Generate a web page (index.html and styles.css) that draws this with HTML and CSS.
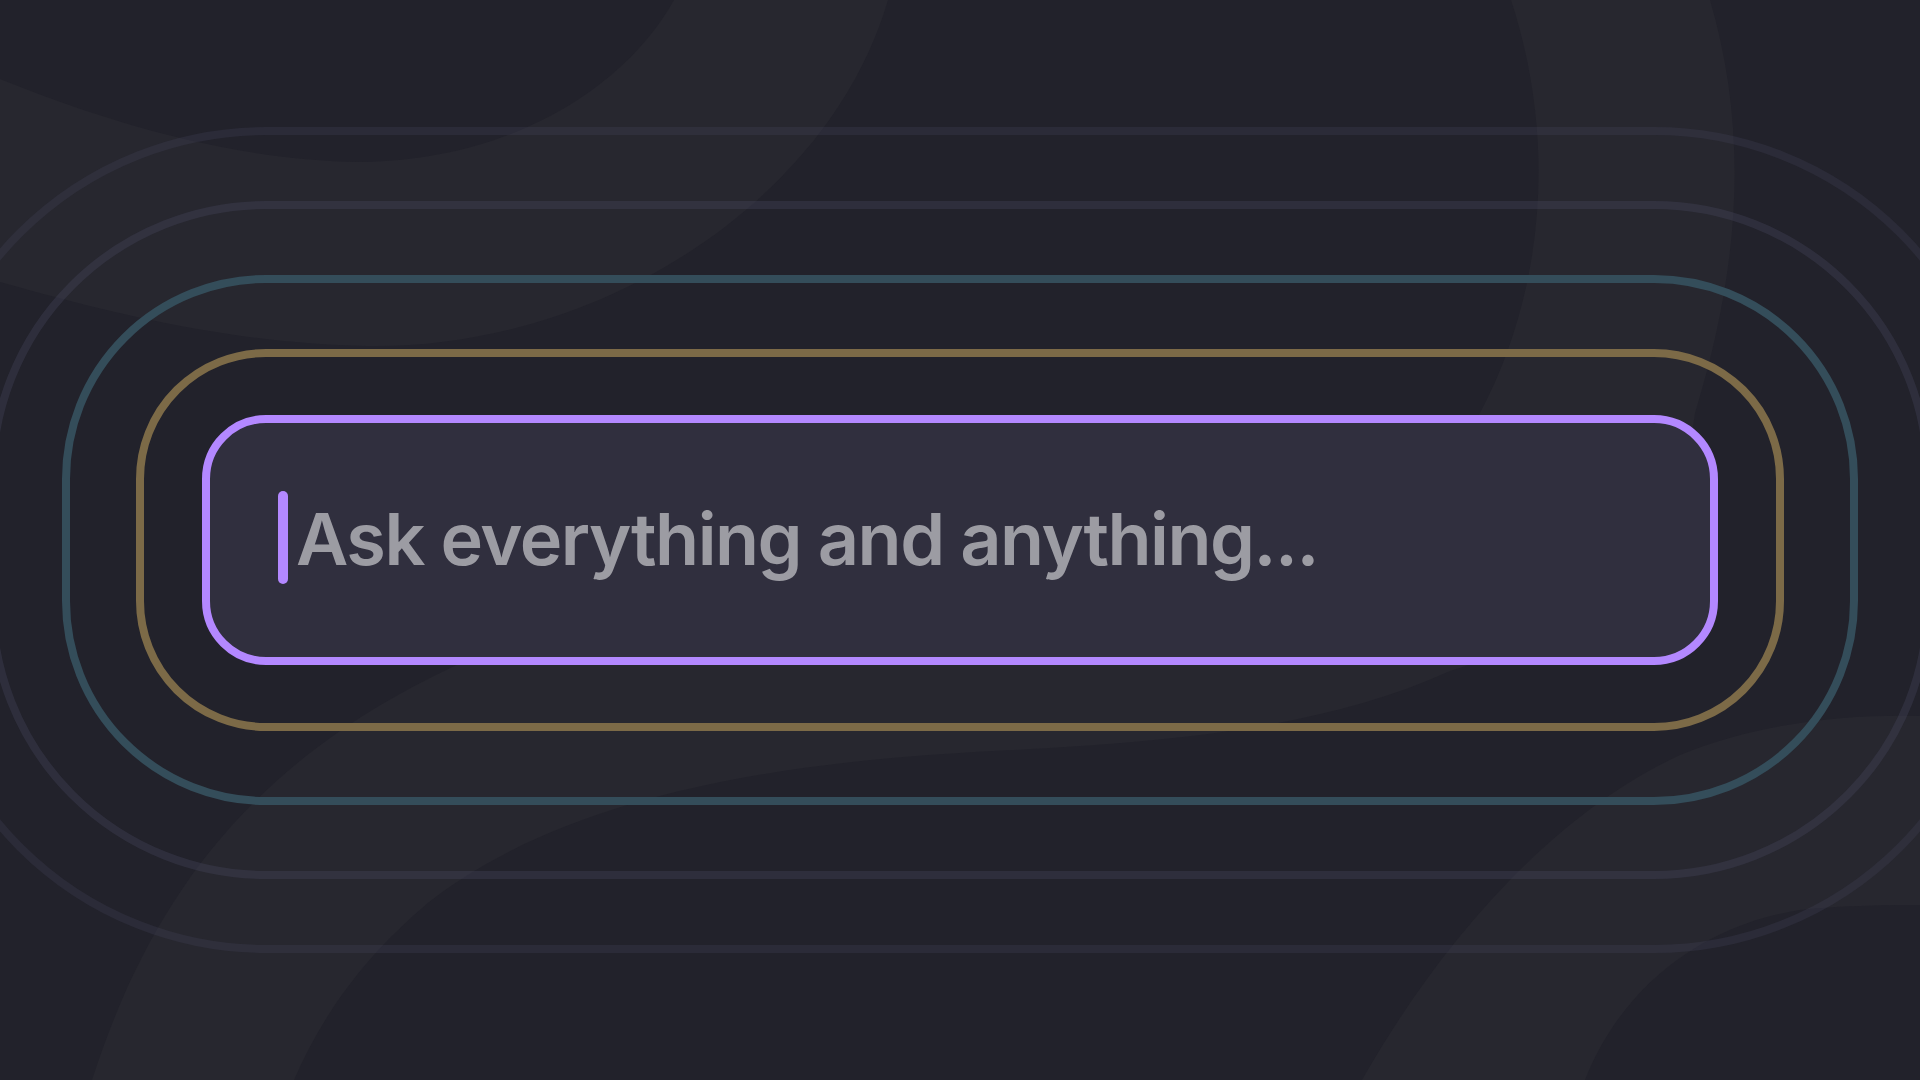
FILE: index.html
```html
<!DOCTYPE html>
<html lang="en">
<head>
  <meta charset="UTF-8">
  <title>Ask</title>
  <link rel="stylesheet" href="styles.css">
</head>
<body>

<!-- soft background shapes -->
<svg class="backdrop" viewBox="0 0 1920 1080" preserveAspectRatio="none" aria-hidden="true">
  <path class="blob" d="M0,0 H888 C830,200 600,350 367,346 C230,344 100,310 0,282 Z"/>
  <path class="hole" d="M0,0 H674 C630,80 520,160 361,162 C220,160 90,115 0,79 Z"/>
  <path class="blob" d="M1511,0 H1710 C1745,120 1745,250 1695,413 C1680,530 1620,620 1450,671 C1300,740 1100,745 960,753 C760,765 560,800 429,902 C360,960 320,1020 294,1080 H92 C150,900 250,760 459,664 C700,560 1400,560 1480,413 C1540,300 1560,150 1511,0 Z"/>
  <path class="blob" d="M1362,1080 C1430,960 1540,820 1680,755 C1760,722 1850,714 1920,716 V905 C1890,905 1850,905 1800,910 C1700,925 1620,990 1585,1080 Z"/>
</svg>

<div class="stage">
  <div class="ring ring-5">
    <div class="ring ring-4">
      <div class="ring ring-3">
        <div class="ring ring-2">
          <div class="field">
            <span class="caret"></span>
            <span class="placeholder">Ask everything and anything...</span>
          </div>
        </div>
      </div>
    </div>
  </div>
</div>

</body>
</html>
```

FILE: styles.css
```css
html, body {
  margin: 0;
  height: 100%;
}
body {
  background: #22222b;
  font-family: Inter, "Noto Sans", sans-serif;
  overflow: hidden;
}
.backdrop {
  position: fixed;
  top: 0;
  left: 0;
  width: 100%;
  height: 100%;
}
.blob {
  fill: #27272f;
}
.hole {
  fill: #22222b;
}
.stage {
  position: relative;
  height: 100vh;
  display: flex;
  align-items: center;
  justify-content: center;
}
.ring {
  box-sizing: border-box;
  flex-shrink: 0;
  border: 8px solid;
  padding: 66px;
}
.ring-5 {
  border-color: rgba(74, 72, 98, 0.23);
  border-radius: 352px;
}
.ring-4 {
  border-color: rgba(74, 72, 98, 0.33);
  border-radius: 278px;
}
.ring-3 {
  border-color: #344d5a;
  border-radius: 204px;
}
.ring-2 {
  border-color: #7c6a47;
  border-radius: 130px;
  padding: 58px;
}
.field {
  box-sizing: border-box;
  width: 1516px;
  height: 250px;
  background: #302f3e;
  border: 8px solid #b388ff;
  border-radius: 64px;
  padding-left: 68px;
  display: flex;
  align-items: center;
  gap: 8px;
}
.caret {
  width: 10px;
  height: 93px;
  border-radius: 5px;
  background: #b388ff;
  margin-top: -5px;
}
.placeholder {
  color: #9c9ca3;
  font-size: 72px;
  font-weight: 600;
  line-height: 1;
  letter-spacing: -1.5px;
  margin-top: -3px;
}
```
